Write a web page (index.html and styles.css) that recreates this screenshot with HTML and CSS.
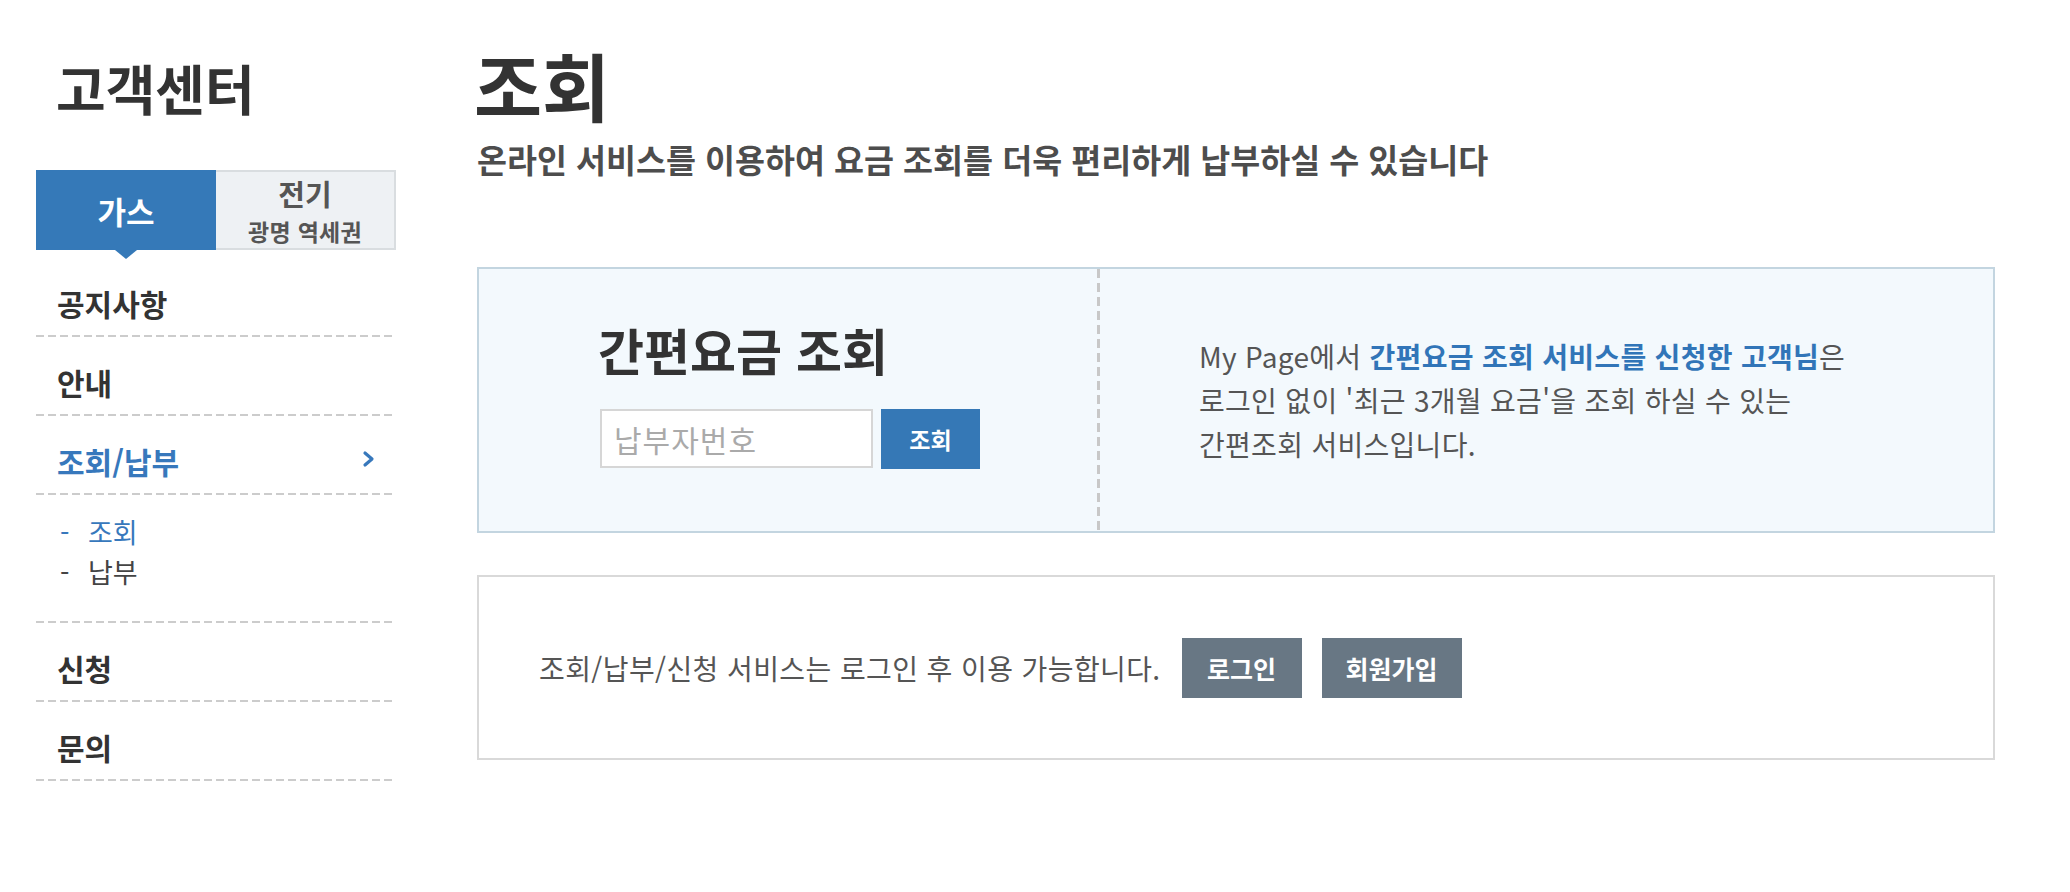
FILE: index.html
```html
<!DOCTYPE html>
<html lang="ko">
<head>
    <meta charset="UTF-8">
    <meta name="viewport" content="width=device-width, initial-scale=1.0">
    <title>조회 - 고객센터</title>
    <link rel="stylesheet" href="styles.css">
</head>
<body>
    <div class="wrap">
        <aside class="side">
            <h2 class="side-title">고객센터</h2>

            <div class="tabs">
                <a class="tab tab-on" href="#">가스</a>
                <a class="tab" href="#">
                    <span class="tab-main">전기</span>
                    <span class="tab-sub">광명 역세권</span>
                </a>
            </div>

            <ul class="menu">
                <li class="menu-item"><a class="menu-link" href="#">공지사항</a></li>
                <li class="menu-item"><a class="menu-link" href="#">안내</a></li>
                <li class="menu-item open">
                    <a class="menu-link" href="#">
                        조회/납부
                        <svg class="chev" width="14" height="18" viewBox="0 0 14 18">
                            <polyline points="3,3 10,9 3,15" fill="none" stroke="#3778bc" stroke-width="3.2" stroke-linecap="round" stroke-linejoin="round"/>
                        </svg>
                    </a>
                    <ul class="sub">
                        <li class="sub-on"><a href="#">조회</a></li>
                        <li><a href="#">납부</a></li>
                    </ul>
                </li>
                <li class="menu-item"><a class="menu-link" href="#">신청</a></li>
                <li class="menu-item"><a class="menu-link" href="#">문의</a></li>
            </ul>
        </aside>

        <main class="content">
            <h1 class="page-title">조회</h1>
            <p class="page-desc">온라인 서비스를 이용하여 요금 조회를 더욱 편리하게 납부하실 수 있습니다</p>

            <div class="quick-box">
                <div class="quick-form">
                    <h3>간편요금 조회</h3>
                    <div class="field">
                        <input type="text" placeholder="납부자번호">
                        <button class="btn-blue">조회</button>
                    </div>
                </div>
                <div class="quick-info">
                    <p>
                        My Page에서 <strong>간편요금 조회 서비스를 신청한 고객님</strong>은<br>
                        로그인 없이 '최근 3개월 요금'을 조회 하실 수 있는<br>
                        간편조회 서비스입니다.
                    </p>
                </div>
            </div>

            <div class="login-box">
                <p>조회/납부/신청 서비스는 로그인 후 이용 가능합니다.</p>
                <button class="btn-gray btn-login">로그인</button>
                <button class="btn-gray btn-join">회원가입</button>
            </div>
        </main>
    </div>
</body>
</html>
```

FILE: styles.css
```css
* {
    margin: 0;
    padding: 0;
    box-sizing: border-box;
}

body {
    font-family: "Noto Sans CJK KR", "Noto Sans", sans-serif;
    background: #fff;
    color: #333;
}

a {
    color: inherit;
    text-decoration: none;
}

ul {
    list-style: none;
}

.wrap {
    display: flex;
    padding-left: 36px;
}

/* 왼쪽 메뉴 */
.side {
    width: 360px;
    flex: none;
}

.side-title {
    padding: 56px 0 0 20px;
    font-size: 54px;
    line-height: 64px;
    font-weight: bold;
    color: #333;
}

.tabs {
    display: flex;
    margin-top: 50px;
    height: 80px;
}

.tab {
    position: relative;
    width: 180px;
    display: flex;
    flex-direction: column;
    justify-content: center;
    align-items: center;
    background: #eef1f4;
    border: 2px solid #d9dde0;
    border-left: none;
    color: #555;
    font-weight: bold;
}

.tab-on {
    background: #3579b8;
    border: none;
    color: #fff;
    font-size: 31px;
}

.tab-on::after {
    content: "";
    position: absolute;
    left: 79px;
    bottom: -9px;
    border-left: 11px solid transparent;
    border-right: 11px solid transparent;
    border-top: 9px solid #3579b8;
}

.tab-main {
    font-size: 29px;
    line-height: 42px;
}

.tab-sub {
    font-size: 23px;
    line-height: 34px;
    letter-spacing: 0.3px;
}

.menu {
    margin-top: 8px;
}

.menu-link,
.sub {
    background: linear-gradient(to right, #cccccc 8px, transparent 8px) repeat-x left bottom / 12px 2px;
}

.menu-link {
    display: flex;
    align-items: center;
    justify-content: space-between;
    padding: 30px 20px 19px 21px;
    font-size: 30px;
    line-height: 30px;
    font-weight: bold;
    color: #333;
}

.open .menu-link {
    color: #3778bc;
}

.chev {
    margin-top: -4px;
}

.sub {
    padding: 17px 0 31px 24px;
}

.sub li {
    font-size: 27px;
    line-height: 40px;
    color: #444;
}

.sub li::before {
    content: "-";
    display: inline-block;
    width: 28px;
}

.sub-on {
    color: #3778bc !important;
}

/* 본문 */
.content {
    margin-left: 81px;
    width: 1518px;
}

.page-title {
    padding-top: 41px;
    font-size: 74px;
    line-height: 86px;
    font-weight: bold;
    color: #333;
    margin-left: -3px;
}

.page-desc {
    margin-top: 12px;
    font-size: 32.6px;
    line-height: 40px;
    font-weight: bold;
    color: #4d4d4d;
}

.quick-box {
    display: flex;
    margin-top: 88px;
    height: 266px;
    background: #f3f9fd;
    border: 2px solid #c3d5e0;
}

.quick-form {
    width: 618px;
    flex: none;
    padding: 52px 0 0 121px;
}

.quick-form h3 {
    font-size: 50px;
    line-height: 56px;
    font-weight: bold;
    color: #333;
    margin-left: -2px;
}

.field {
    display: flex;
    margin-top: 32px;
}

.field input {
    width: 273px;
    height: 59px;
    border: 2px solid #d6d6d6;
    background: #fff;
    padding: 0 12px;
    font-family: inherit;
    font-size: 30px;
    letter-spacing: 1px;
    color: #333;
    outline: none;
}

.field input::placeholder {
    color: #aaa;
}

.btn-blue,
.btn-gray {
    border: none;
    font-family: inherit;
    font-weight: bold;
    font-size: 23px;
    color: #fff;
    cursor: pointer;
}

.btn-blue {
    width: 99px;
    height: 60px;
    margin-left: 8px;
    background: #3578b6;
}

.quick-info {
    flex: 1;
    display: flex;
    align-items: center;
    padding-left: 102px;
    background: linear-gradient(#c8c8c8 9px, transparent 9px) repeat-y left top / 3px 14px;
}

.quick-info p {
    font-size: 28px;
    line-height: 44px;
    color: #555;
    letter-spacing: 0.3px;
}

.quick-info strong {
    color: #3175b8;
}

.login-box {
    display: flex;
    align-items: center;
    margin-top: 42px;
    height: 185px;
    padding-left: 60px;
    border: 2px solid #d9d9d9;
}

.login-box p {
    font-size: 28px;
    color: #555;
    letter-spacing: 0.4px;
}

.btn-gray {
    height: 60px;
    background: #687784;
    font-size: 25px;
}

.btn-login {
    width: 120px;
    margin-left: 21px;
}

.btn-join {
    width: 140px;
    margin-left: 20px;
}
```
